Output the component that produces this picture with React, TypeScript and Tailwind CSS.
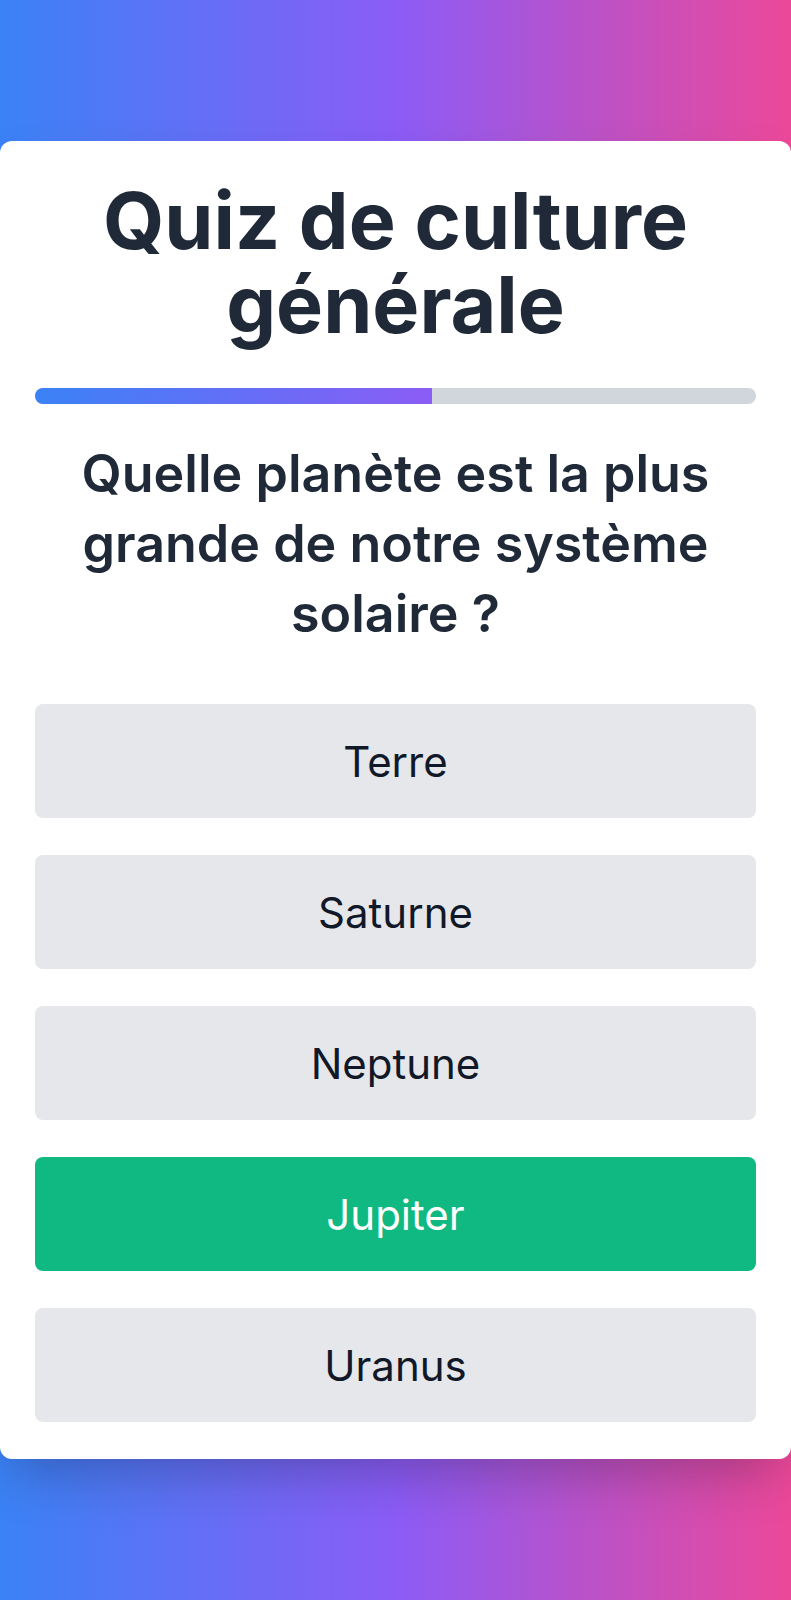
import React from "react";

const options = [
  { label: "Terre", correct: false },
  { label: "Saturne", correct: false },
  { label: "Neptune", correct: false },
  { label: "Jupiter", correct: true },
  { label: "Uranus", correct: false },
];

export default function App() {
  return (
    <div
      className="min-h-[1600px] w-full flex items-center bg-[linear-gradient(to_right,#3b82f6,#8b5cf6,#ec4899)]"
      style={{ fontFamily: "Inter, 'Noto Sans', sans-serif" }}
    >
      <div className="w-full bg-white rounded-xl shadow-2xl px-[35px] pt-[37px] pb-[37px]">
        <h1 className="text-center text-[79px] leading-[84px] font-bold text-[#1f2937]">
          Quiz de culture générale
        </h1>
        <div className="mt-[42px] h-4 w-full rounded-full bg-gray-300 overflow-hidden">
          <div className="h-full w-[55%] bg-[linear-gradient(to_right,#3b82f6,#8b5cf6)]" />
        </div>
        <h2 className="mt-[35px] text-center text-[52px] leading-[70px] font-semibold text-[#1f2937]">
          Quelle planète est la plus grande de notre système solaire ?
        </h2>
        <div className="mt-[55px] flex flex-col gap-[37px]">
          {options.map((o) => (
            <button
              key={o.label}
              className={
                o.correct
                  ? "h-[114px] w-full rounded-lg bg-[#10b981] text-white text-[42px] flex items-center justify-center"
                  : "h-[114px] w-full rounded-lg bg-gray-200 text-[#111827] text-[42px] flex items-center justify-center"
              }
            >
              {o.label}
            </button>
          ))}
        </div>
      </div>
    </div>
  );
}
